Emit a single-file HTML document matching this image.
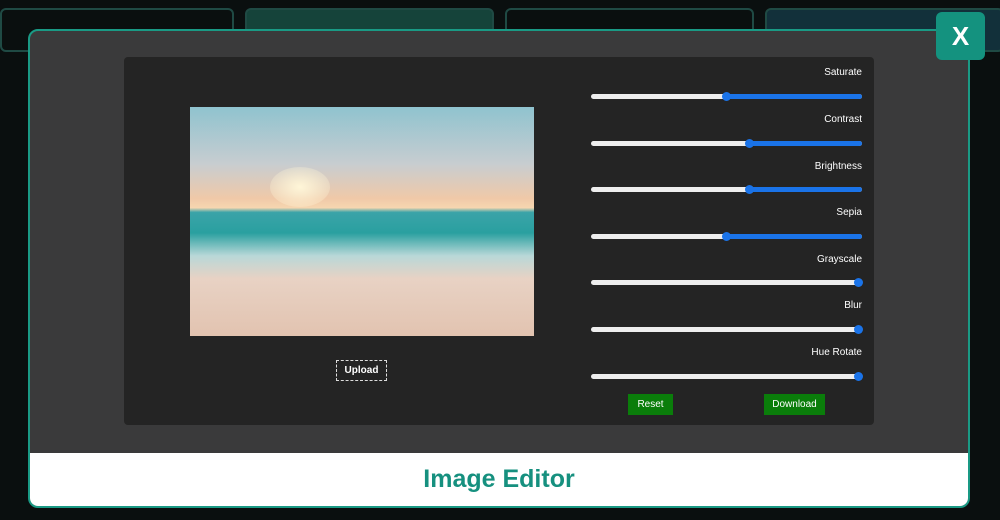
<!DOCTYPE html><html><head><style>
body{margin:0;width:1000px;height:520px;overflow:hidden;background:#0a0f0f;font-family:"Liberation Sans",sans-serif;position:relative}
.bg{position:absolute;border:2px solid #1f4a44;border-radius:6px;top:8px;height:40px}
.modal{position:absolute;left:28px;top:29px;width:938px;height:475px;border:2px solid #1a9a85;border-radius:10px;background:#3a3a3b;overflow:hidden}
.foot{position:absolute;left:0;right:0;bottom:0;height:53px;background:#fff;text-align:center;line-height:53px;font-size:25px;font-weight:bold;color:#16907f}
.panel{position:absolute;left:94px;top:26px;width:750px;height:368px;background:#242424;border-radius:4px}
.img{position:absolute;left:66px;top:50px;width:344px;height:229px;background:linear-gradient(180deg,#8fc3cf 0%,#c8cdd0 25%,#f0c9a8 40%,#f6d6b0 44%,#3aa3a8 46%,#2aa0a0 55%,#b9d8d8 65%,#e8d2c4 75%,#e2c3b0 100%)}
.sun{position:absolute;left:80px;top:60px;width:60px;height:40px;border-radius:50%;background:radial-gradient(#fff6d8,rgba(255,230,190,0));}
.up{position:absolute;left:212px;top:303px;width:49px;height:19px;border:1px dashed #ddd;color:#fff;font-size:10px;font-weight:bold;text-align:center;line-height:19px}
.lab{position:absolute;right:12px;color:#fff;font-size:10px}
.tr{position:absolute;left:467px;width:271px;height:5px;border-radius:3px;background:#eee}
.tr b{position:absolute;right:0;top:0;height:5px;background:#1a73e8;border-radius:3px}
.tr i{position:absolute;top:-2px;width:9px;height:9px;border-radius:50%;background:#1a73e8;margin-left:-4px}
.btn{position:absolute;top:337px;height:21px;background:#0a7d0a;color:#fff;font-size:10px;text-align:center;line-height:21px}
.x{position:absolute;left:936px;top:12px;width:49px;height:48px;background:#14927f;border-radius:6px;color:#fff;font-size:26px;font-weight:bold;text-align:center;line-height:48px}
</style></head><body>
<div class="bg" style="left:0;width:230px"></div><div class="bg" style="left:245px;width:245px;background:#15433a"></div><div class="bg" style="left:505px;width:245px"></div><div class="bg" style="left:765px;width:235px;background:#12303a"></div>
<div class="modal">
<div class="panel">
<div class="img"><div class="sun"></div></div>
<div class="up">Upload</div>
<div class="lab" style="top:10px">Saturate</div><div class="tr" style="top:37px"><b style="left:135px"></b><i style="left:135px"></i></div>
<div class="lab" style="top:57px">Contrast</div><div class="tr" style="top:84px"><b style="left:158px"></b><i style="left:158px"></i></div>
<div class="lab" style="top:104px">Brightness</div><div class="tr" style="top:130px"><b style="left:158px"></b><i style="left:158px"></i></div>
<div class="lab" style="top:150px">Sepia</div><div class="tr" style="top:177px"><b style="left:135px"></b><i style="left:135px"></i></div>
<div class="lab" style="top:197px">Grayscale</div><div class="tr" style="top:223px"><i style="left:267px"></i></div>
<div class="lab" style="top:243px">Blur</div><div class="tr" style="top:270px"><i style="left:267px"></i></div>
<div class="lab" style="top:290px">Hue Rotate</div><div class="tr" style="top:317px"><i style="left:267px"></i></div>
<div class="btn" style="left:504px;width:45px">Reset</div>
<div class="btn" style="left:640px;width:61px">Download</div>
</div>
<div class="foot">Image Editor</div>
</div>
<div class="x">X</div>
</body></html>
